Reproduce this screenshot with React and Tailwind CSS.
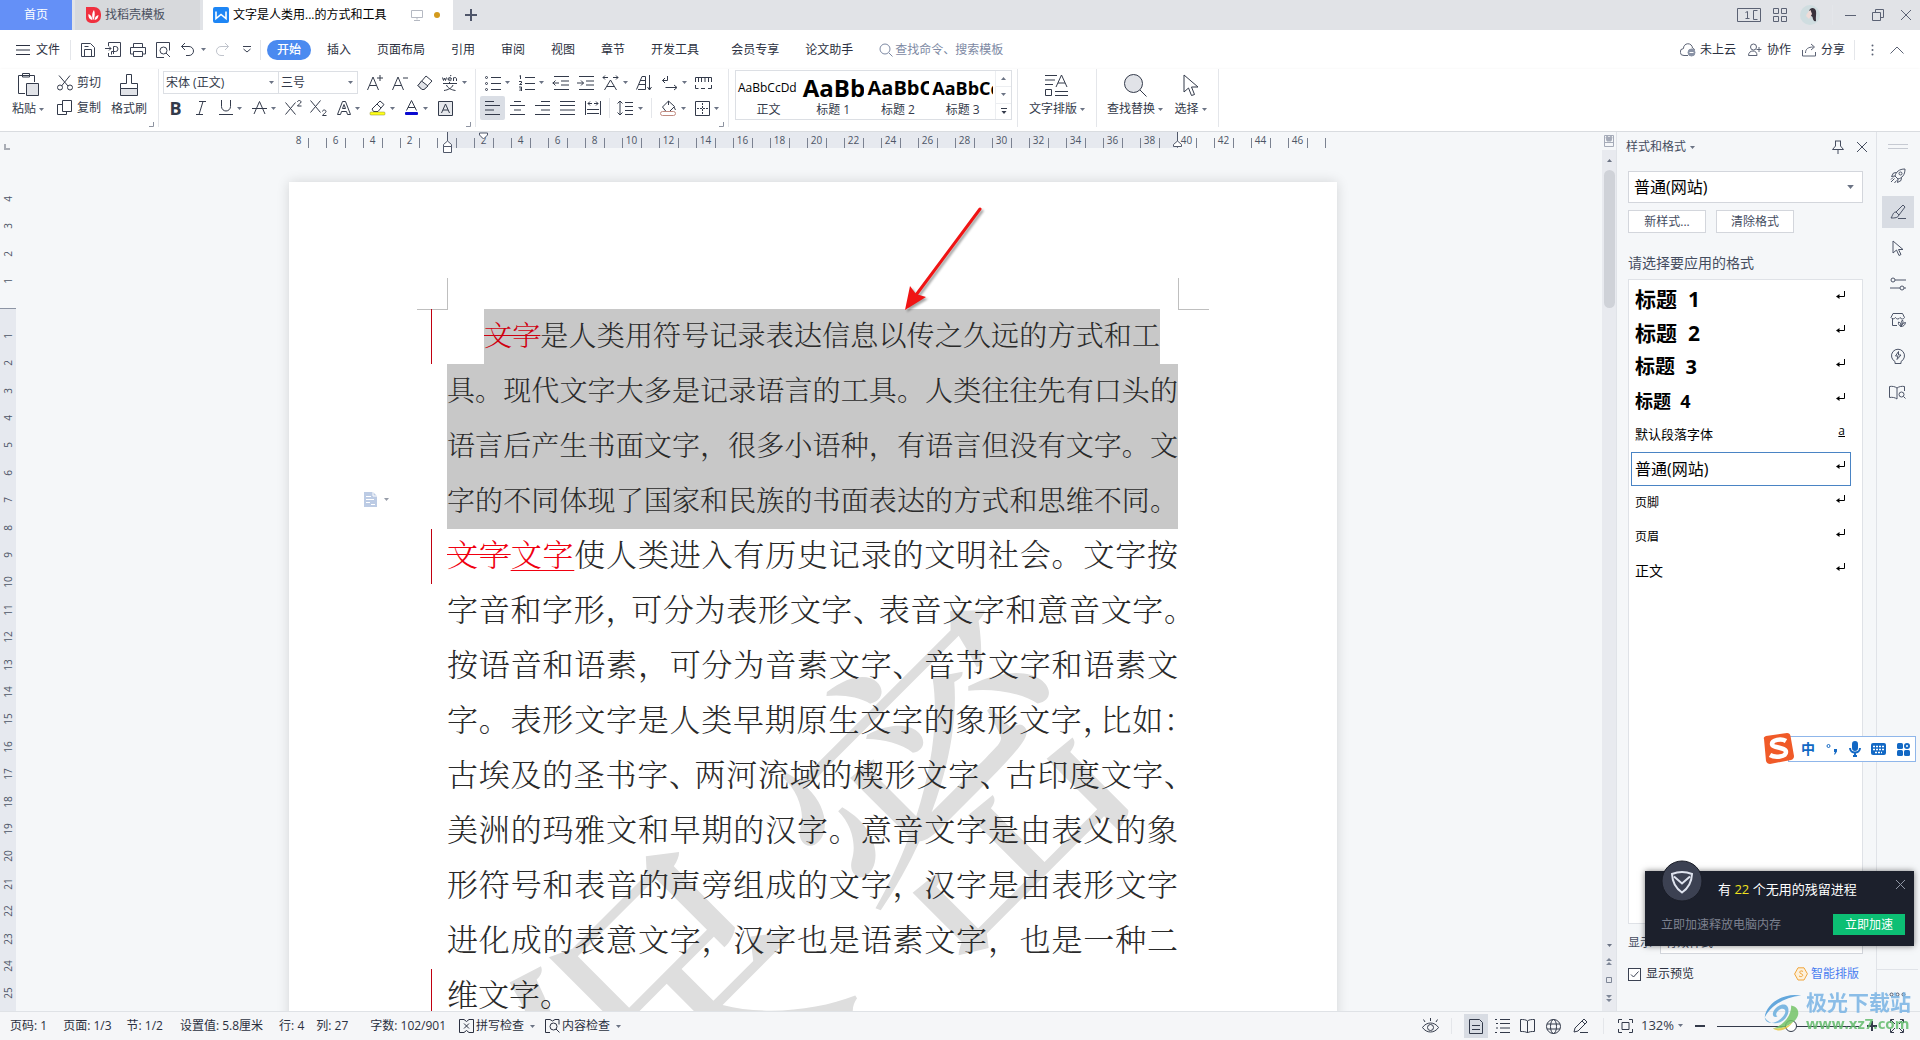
import React from 'react';

const Svg = ({ w = 18, h = 18, vb, sw = 1, className = '', children }) => (
  <svg
    width={w}
    height={h}
    viewBox={vb || `0 0 ${w} ${h}`}
    fill="none"
    stroke="currentColor"
    strokeWidth={sw}
    className={`shrink-0 ${className}`}
    aria-hidden="true"
  >
    {children}
  </svg>
);

const Caret = ({ className = '' }) => (
  <svg width="5" height="3" viewBox="0 0 5 3" className={`shrink-0 fill-[#6b7384] ${className}`} aria-hidden="true">
    <path d="M0 0h5L2.5 3z" />
  </svg>
);

const Tool = ({ label, caret, active, children }) => (
  <button
    type="button"
    aria-label={label}
    className={`flex h-6 shrink-0 items-center justify-center gap-1 rounded-xs ${caret ? 'w-[34px]' : 'w-[25px]'} ${active ? 'bg-[#dadee5]' : ''}`}
  >
    {children}
    {caret && <Caret />}
  </button>
);

const VLine = ({ className = '' }) => <span className={`w-px shrink-0 bg-[#e4e6ea] ${className}`} />;

const BigTool = ({ label, caret, className, children }) => (
  <button type="button" className={`flex flex-col items-center pt-[2px] ${className}`}>
    <span className="flex h-7 items-center">{children}</span>
    <span className="flex items-center gap-[3px] whitespace-nowrap leading-5">
      {label}
      {caret && <Caret />}
    </span>
  </button>
);

/* ---------- title bar ---------- */

function TitleBar() {
  return (
    <header className="flex h-[30px] shrink-0 items-stretch bg-[#e1e3e7]">
      <button type="button" className="w-[72px] bg-[#6490f7] text-white">首页</button>
      <button type="button" className="ml-[3px] flex w-[125px] items-center gap-1 bg-[#d7d9dc] pl-[11px] text-[#4a5060]">
        <svg width="15" height="16" viewBox="0 0 15 16" aria-hidden="true">
          <path d="M0 0h8a7 7 0 0 1 7 7v2a7 7 0 0 1-7 7H5a5 5 0 0 1-5-5z" fill="#f0303f" />
          <path d="M7.500 13C5.500 10 6 5.500 8 3c1.200 2.500 1 7-.5 10zM6.500 13C3.500 12.500 2 10 2.500 7c2.500 1 4 3.500 4 6zM8.500 13c.2-2.500 1.500-4.500 4-5-.2 3-1.500 4.800-4 5z" fill="#fff" />
        </svg>
        找稻壳模板
      </button>
      <div className="ml-[3px] flex w-[250px] items-center bg-white pl-[10px] text-black">
        <svg width="16" height="16" viewBox="0 0 16 16" aria-hidden="true">
          <rect width="16" height="16" rx="2" fill="#1e86f5" />
          <path d="M3 4.500v7l5-4 5 4v-7" fill="none" stroke="#fff" strokeWidth="1.600" />
        </svg>
        <span className="ml-1 whitespace-nowrap">文字是人类用...的方式和工具</span>
        <Svg w={12} h={12} className="ml-auto text-[#b5b9c2]">
          <path d="M.5 1.500h11v7H.5zM6 8.500v2M3 11.500h6" />
        </Svg>
        <span className="mr-[13px] ml-[11px] size-[6px] rounded-full bg-[#d39a1c]" />
      </div>
      <button type="button" aria-label="新建" className="flex w-9 items-center justify-center text-[#4f566a]">
        <Svg w={12} h={12} sw={2}><path d="M6 0v12M0 6h12" /></Svg>
      </button>
      <div className="ml-auto flex items-center pr-2 text-[#5b6274]">
        <button type="button" aria-label="窗口">
          <Svg w={24} h={14}>
            <path d="M.5.5h23v13H.5zM20.500 2.500h-4v9h4M8.500 4.500l2-1v7M8.500 10.500h4" />
          </Svg>
        </button>
        <button type="button" aria-label="应用" className="ml-3">
          <Svg w={14} h={14}><path d="M.5.5h5v5h-5zM8.500.5h5v5h-5zM.5 8.500h5v5h-5zM8.500 8.500h5v5h-5z" /></Svg>
        </button>
        <button type="button" aria-label="头像" className="ml-[13px]">
          <svg width="20" height="20" viewBox="0 0 20 20" aria-hidden="true">
            <circle cx="10" cy="10" r="10" fill="#cfdde0" />
            <path d="M9 6c1-4 6-4 7 0 .5 3-.5 6 0 10-2 1-3-1-3.500-4-1-1-3-2-3.500-6z" fill="#38323c" />
            <path d="M10.500 5c-2 1-4 4-4.500 6l3 3 3-5z" fill="#f0dcd8" />
          </svg>
        </button>
        <VLine className="ml-3 h-5 bg-[#c8cbd2]" />
        <button type="button" aria-label="最小化" className="ml-3">
          <Svg w={11} h={12}><path d="M0 6.500h11" /></Svg>
        </button>
        <button type="button" aria-label="还原" className="ml-4">
          <Svg w={12} h={12}><path d="M.5 3.500h8v8h-8zM3.500 3.500v-3h8v8h-3" /></Svg>
        </button>
        <button type="button" aria-label="关闭" className="ml-4">
          <Svg w={12} h={12}><path d="M1 1l10 10M11 1L1 11" /></Svg>
        </button>
      </div>
    </header>
  );
}

/* ---------- menu bar ---------- */

const MENUS = ['插入', '页面布局', '引用', '审阅', '视图', '章节', '开发工具'];
const EXTRA_MENUS = ['会员专享', '论文助手'];

function MenuBar() {
  return (
    <nav className="flex h-[39px] shrink-0 items-center px-4 text-[#2b3040]">
      <button type="button" className="flex items-center gap-[6px]">
        <Svg w={14} h={10}><path d="M0 .5h14M0 5h14M0 9.500h14" /></Svg>
        文件
      </button>
      <VLine className="ml-[10px] h-5" />
      <div className="ml-[9px] flex items-center gap-[9px] text-[#3a4152]">
        <button type="button" aria-label="保存">
          <Svg w={16} h={16}><path d="M1.500 1.500h9l4 4v9h-13zM4.500 14V7.500h7V14M4.500 4.500h4" /></Svg>
        </button>
        <button type="button" aria-label="输出为PDF">
          <Svg w={16} h={16}><path d="M3.500 4V.5h12v14h-12V11M0 6.500h6M4 4.500l2 2-2 2M8.500 12V4.500h2a2 2 0 0 1 0 5H6.500v3" /></Svg>
        </button>
        <button type="button" aria-label="打印">
          <Svg w={16} h={16}><path d="M3.500 5V1.500h9V5M3.500 12h-3V5.500h15V12h-3M3.500 9.500h9v5h-9z" /></Svg>
        </button>
        <button type="button" aria-label="打印预览">
          <Svg w={16} h={16}><path d="M9 15.500H1.500V.5h13v8" /><circle cx="8.500" cy="8.500" r="3.500" /><path d="M11 11l4 4" /></Svg>
        </button>
        <button type="button" aria-label="撤销" className="flex items-center gap-[6px]">
          <Svg w={15} h={15}><path d="M5 1L1.500 4.500 5 8M1.500 4.500H9a4.500 4.500 0 0 1 0 9H6" /></Svg>
          <Caret />
        </button>
        <button type="button" aria-label="恢复" className="text-[#c0c4cc]">
          <Svg w={15} h={15}><path d="M10 1l3.500 3.500L10 8M13.500 4.500H6a4.500 4.500 0 0 0 0 9h3" /></Svg>
        </button>
        <button type="button" aria-label="更多" className="ml-1">
          <Svg w={8} h={7}><path d="M0 .5h8M.5 3L4 6l3.500-3" /></Svg>
        </button>
      </div>
      <VLine className="ml-[9px] h-5" />
      <button type="button" className="ml-[6px] h-5 w-11 rounded-full bg-[#4a8af0] font-medium text-white">开始</button>
      <div className="ml-4 flex items-center gap-[26px]">
        {MENUS.map((m) => (
          <button type="button" key={m} className="whitespace-nowrap">{m}</button>
        ))}
      </div>
      <div className="ml-8 flex items-center gap-[26px]">
        {EXTRA_MENUS.map((m) => (
          <button type="button" key={m} className="whitespace-nowrap">{m}</button>
        ))}
      </div>
      <label className="ml-[26px] flex items-center gap-[2px] text-[#7d89a3]">
        <Svg w={14} h={14}><circle cx="6" cy="6" r="5" /><path d="M10 10l3.500 3.500" /></Svg>
        <input type="text" aria-label="搜索" placeholder="查找命令、搜索模板" className="w-[130px] bg-transparent outline-none placeholder:text-[#7d89a3]" />
      </label>
      <div className="ml-auto flex items-center whitespace-nowrap">
        <button type="button" className="flex items-center gap-1">
          <Svg w={16} h={14} className="text-[#5b6274]">
            <path d="M8 12.500H4a3.500 3.500 0 0 1-.5-7 4.500 4.500 0 0 1 9-.5c1 .3 1.800 1 2 2" />
            <circle cx="11.500" cy="9.500" r="3.500" fill="#8992a5" stroke="#8992a5" /><path d="M9.500 9.500h4" stroke="#fff" />
          </Svg>
          未上云
        </button>
        <button type="button" className="ml-3 flex items-center gap-[5px]">
          <Svg w={14} h={14} className="text-[#5b6274]"><circle cx="5.500" cy="4" r="3" /><path d="M.5 12.500c0-3 2-4.500 4.500-4.500s4 1.500 4 4.500zM8.500 6.500h5M11 4v5" /></Svg>
          协作
        </button>
        <button type="button" className="ml-[11px] flex items-center gap-[5px]">
          <Svg w={14} h={14} className="text-[#5b6274]"><path d="M.5 7v6h13V9M3.500 10c0-4 2.500-6 8-6M9 1l3.500 3L9 7" /></Svg>
          分享
        </button>
        <VLine className="ml-[9px] h-5" />
        <button type="button" aria-label="更多" className="ml-4 text-[#5b6274]">
          <Svg w={3} h={12} className="fill-current stroke-none"><circle cx="1.500" cy="1.500" r="1" /><circle cx="1.500" cy="6" r="1" /><circle cx="1.500" cy="10.500" r="1" /></Svg>
        </button>
        <button type="button" aria-label="收起功能区" className="ml-4 text-[#5b6274]">
          <Svg w={14} h={8}><path d="M.5 7.500L7 1l6.500 6.500" /></Svg>
        </button>
      </div>
    </nav>
  );
}

/* ---------- ribbon ---------- */

const GALLERY = [
  ['正文', 'AaBbCcDd', 'text-xs'],
  ['标题 1', 'AaBb', 'text-[24px] font-bold'],
  ['标题 2', 'AaBbCc', 'text-xl font-bold'],
  ['标题 3', 'AaBbCc', 'text-[18px] font-bold'],
];

const Corner = () => <Svg w={5} h={5} className="absolute right-1 bottom-1 text-[#8d93a0]"><path d="M4.500 0v4.500H0" /></Svg>;

function FontBox({ label, value, className }) {
  return (
    <label className={`relative flex h-[23px] items-center border border-[#dcdfe4] ${className}`}>
      <span className="sr-only">{label}</span>
      <select className="h-[21px] w-full appearance-none bg-transparent pl-[2px] leading-5 outline-none" defaultValue={value}>
        <option>{value}</option>
      </select>
      <Caret className="pointer-events-none absolute right-1" />
    </label>
  );
}

function Ribbon() {
  return (
    <section className="flex h-[63px] shrink-0 items-stretch border-b border-[#d9dce0] bg-white text-[#333a4a] shadow-sm">
      <div className="relative flex w-[158px] pl-3">
        <BigTool label="粘贴" caret className="w-8">
          <Svg w={22} h={24}>
            <path d="M8 20.500H1.500v-18h16V9M5.500 2.500V.5h7v3.500h-7z" />
            <path d="M9.500 10.500h12v12h-12z" fill="#e1e3e8" />
          </Svg>
        </BigTool>
        <div className="ml-[13px] flex flex-col text-left">
          <button type="button" className="flex h-[27px] items-center gap-1">
            <Svg w={16} h={16}><path d="M2 .5l9 10.500M13 .5L4.500 11" /><circle cx="3" cy="12.500" r="2.500" /><circle cx="13" cy="12.500" r="2.500" /></Svg>
            剪切
          </button>
          <button type="button" className="flex h-6 items-center gap-1">
            <Svg w={16} h={16}><path d="M5 4.500H.5v10h9V12M5.500.5h9v11h-9z" /></Svg>
            复制
          </button>
        </div>
        <BigTool label="格式刷" className="ml-[10px] w-9">
          <Svg w={18} h={24}>
            <path d="M6.500 10.500v-9h5v9h6v5H.5v-5z" /><path d="M.5 15.500h17v7H.5z" fill="#e1e3e8" />
          </Svg>
        </BigTool>
        <Corner />
      </div>
      <VLine className="mb-1" />
      <div className="relative w-[316px] pl-1">
        <div className="flex h-[27px] items-center">
          <FontBox label="字体" value="宋体 (正文)" className="w-[116px]" />
          <FontBox label="字号" value="三号" className="mr-1 w-[79px] border-l-0" />
          <Tool label="增大字号"><Svg w={16} h={16}><path d="M.5 15L6 2l5.500 13M2.500 10.500h7M13 0v6M10 3h6" /></Svg></Tool>
          <Tool label="减小字号"><Svg w={16} h={16}><path d="M.5 15L6 2l5.500 13M2.500 10.500h7M11 3h5" /></Svg></Tool>
          <Tool label="清除格式"><Svg w={16} h={16}><path d="M9 1l6 5-8 8.500H5L1 10.500z" /><path d="M1 10.500L4.500 6 11 11l-4 3.500H5z" fill="#e1e3e8" /></Svg></Tool>
          <Tool label="拼音指南" caret>
            <Svg w={16} h={16}><path d="M.5 2.500l1 3 1-2.500 1 2.500 1-3M6 4h3.500c0-2-3.500-2-3.500 0s3 2 3.500 1M8 1l1.500-1M11.500 6V2.500M11.500 4c0-2 3-2 3 0v2M1 8.500h14M7.500 7v1.500M4.500 10c1 3 5 5 9 5.500M11 10c-1 3-5 5-9 5.500" /></Svg>
          </Tool>
        </div>
        <div className="flex h-6 items-center">
          <Tool label="加粗"><span className="text-[18px] leading-5 font-bold">B</span></Tool>
          <Tool label="倾斜"><Svg w={12} h={16}><path d="M4 1.500h7M1 14.500h7M8 1.500L4 14.500" /></Svg></Tool>
          <Tool label="下划线" caret><Svg w={14} h={16}><path d="M2.500 0v6.500a4.500 4.500 0 0 0 9 0V0M0 14.500h14" /></Svg></Tool>
          <Tool label="删除线" caret><Svg w={15} h={16}><path d="M2 14L7.500 1.500 13 14M0 8.500h15" /></Svg></Tool>
          <Tool label="上标"><Svg w={17} h={16}><path d="M.5 2.500l10 12M10.500 2.500l-10 12M12.500 2c0-2 3.500-2 3.500 0 0 1.500-3 2.500-3.500 4h4" /></Svg></Tool>
          <Tool label="下标"><Svg w={17} h={16}><path d="M.5.5l10 12M10.500.5l-10 12M12.500 11.500c0-2 3.500-2 3.500 0 0 1.500-3 2.500-3.500 4h4" /></Svg></Tool>
          <Tool label="文字效果" caret><Svg w={14} h={16}><path d="M.5 14.500L5.500 1.500h3l5 13h-3l-1-3h-5l-1 3zM5.500 8.500L7 4.500l1.500 4z" /></Svg></Tool>
          <Tool label="突出显示" caret>
            <Svg w={17} h={16}><path d="M3 9l8-8 4 3.500-6 7H4.500zM8 4l4 4" /><rect x="1" y="12" width="15" height="3" rx="1" fill="#ffff1a" stroke="#8a8a30" strokeWidth=".5" /></Svg>
          </Tool>
          <Tool label="字体颜色" caret>
            <Svg w={15} h={16}><path d="M2.500 10.500l5-10 5 10M4 7.500h7" /><rect x="1" y="12" width="13" height="3" rx="1" fill="#0a0ad0" stroke="none" /></Svg>
          </Tool>
          <Tool label="字符底纹"><Svg w={15} h={15}><path d="M.5.5h14v14H.5z" fill="#e6e8ec" /><path d="M3.500 12l4-9 4 9M5 9h5" /></Svg></Tool>
        </div>
        <Corner />
      </div>
      <VLine className="mb-1" />
      <div className="relative w-[252px] pl-1">
        <div className="flex h-[27px] items-center">
          <Tool label="项目符号" caret><Svg w={16} h={16}><path d="M6 2.500h10M6 8.500h10M6 14.500h10" /><circle cx="1.500" cy="2.500" r="1" /><circle cx="1.500" cy="8.500" r="1" /><circle cx="1.500" cy="14.500" r="1" /></Svg></Tool>
          <Tool label="编号" caret><Svg w={16} h={16}><path d="M6 2.500h10M6 8.500h10M6 14.500h10M.5 1l1-.5V4M0 6.500h2.500v1.500L.5 9.500H3M0 12h2.500v4H0M.5 14h2" /></Svg></Tool>
          <Tool label="减少缩进"><Svg w={17} h={16}><path d="M2 1.500h15M9 6h8M9 10h8M2 14.500h15M.5 8H7M3.500 5.500L1 8l2.500 2.500" /></Svg></Tool>
          <Tool label="增加缩进"><Svg w={17} h={16}><path d="M2 1.500h15M9 6h8M9 10h8M2 14.500h15M0 8h6.500M4 5.500L6.500 8 4 10.500" /></Svg></Tool>
          <Tool label="中文版式" caret><Svg w={17} h={16}><path d="M2.500 15l6-10 6 10M5 11.500h7M1 2.500h5M3 .5l-2 2 2 2M11 2.500h5M14 .5l2 2-2 2" /></Svg></Tool>
          <Tool label="排序"><Svg w={17} h={16}><path d="M.5 14.500L6 1.500h3.500v13M3 9.500h6.500M2 14.500h7.500M4 5.500h5.500M13.500 0v14.500M11.500 12l2 3 2-3" /></Svg></Tool>
          <Tool label="换行" caret><Svg w={16} h={16}><path d="M5.500 1v4.500H.5M3 3L.5 5.500 3 8M3.500 12.500h11M12 10l3 2.500-3 2.500" /></Svg></Tool>
          <Tool label="制表位"><Svg w={17} h={14}><path d="M.5 6V1.500h16V6M.5 9v3.500h3M6 12.500h4M13 12.500h3.500V9M3.500 2v4M6.500 2v4M10 2v4M13.500 2v4" /></Svg></Tool>
        </div>
        <div className="flex h-6 items-center">
          <Tool label="左对齐" active><Svg w={15} h={14}><path d="M0 .5h9M0 4.500h15M0 9h9M0 13.500h15" /></Svg></Tool>
          <Tool label="居中"><Svg w={15} h={14}><path d="M4 .5h7M0 4.500h15M4 9h7M0 13.500h15" /></Svg></Tool>
          <Tool label="右对齐"><Svg w={15} h={14}><path d="M6 .5h9M0 4.500h15M6 9h9M0 13.500h15" /></Svg></Tool>
          <Tool label="两端对齐"><Svg w={15} h={14}><path d="M0 .5h15M0 4.500h15M0 9h15M0 13.500h15" /></Svg></Tool>
          <Tool label="分散对齐"><Svg w={16} h={14}><path d="M.5 0v14M15.500 0v14M3 2.500h4M9 2.500h4M5 .5l-2 2 2 2M11 .5l2 2-2 2M2 8.500h12M2 12.500h12" /></Svg></Tool>
          <VLine className="mr-[3px] ml-1 h-5" />
          <Tool label="行距" caret><Svg w={17} h={16}><path d="M3 1v14M.5 3.500L3 1l2.500 2.500M.5 12.500L3 15l2.500-2.500M8 2.500h8M8 6.500h8M8 10.500h8M8 14.500h8" /></Svg></Tool>
          <VLine className="mr-1 ml-1 h-5" />
          <Tool label="底纹颜色" caret><Svg w={17} h={16}><path d="M2.500 7l6-6 6 5.500-5 5H6zM8.500 1v4M14 7l1.500 3" /><rect x=".5" y="11.500" width="15" height="4" rx="2" stroke="#c08a80" fill="#fff" /></Svg></Tool>
          <Tool label="边框" caret><Svg w={15} h={15}><path d="M.5.5h14v14H.5z" /><path d="M7.500 2v12M2 7.500h12" strokeDasharray="2 1" /></Svg></Tool>
        </div>
        <Corner />
      </div>
      <VLine className="mb-1" />
      <div className="flex w-[288px] items-start pt-px pl-[6px]">
        <div className="flex h-[50px] w-[277px] border border-[#dcdfe4]">
          {GALLERY.map(([name, sample, cls], i) => (
            <button type="button" key={name} className="flex h-full w-[65px] flex-col items-center overflow-hidden">
              <span className={`flex h-[33px] items-center self-start overflow-hidden pl-[2px] text-black ${i === 0 ? 'w-[65px]' : 'w-[63px]'} ${cls}`}>
                {sample}
              </span>
              <span className="leading-3">{name}</span>
            </button>
          ))}
          <div className="ml-auto flex w-4 flex-col border-l border-[#eceef1]">
            <button type="button" aria-label="上一行" className="flex flex-1 items-center justify-center border-b border-[#eceef1]"><Caret className="rotate-180" /></button>
            <button type="button" aria-label="下一行" className="flex flex-1 items-center justify-center border-b border-[#eceef1]"><Caret /></button>
            <button type="button" aria-label="展开" className="flex flex-1 items-center justify-center"><Svg w={6} h={7}><path d="M0 .5h6" /><path d="M.5 3h5L3 6z" fill="currentColor" stroke="none" /></Svg></button>
          </div>
        </div>
      </div>
      <VLine className="mb-1" />
      <div className="flex w-[78px] justify-center">
        <BigTool label="文字排版" caret className="w-[70px]">
          <Svg w={24} h={22}><path d="M0 1.500h12M0 6h10M0 10.500h8M.5 15.500h6v6h-6zM10 17.500h13M10 21.500h13M11 13l5.500-12L22 13M13 9h7" /></Svg>
        </BigTool>
      </div>
      <VLine className="mb-1" />
      <div className="flex w-[121px] pl-[9px]">
        <BigTool label="查找替换" caret className="w-[58px]">
          <Svg w={23} h={23}><circle cx="9.500" cy="9.500" r="9" fill="#e1e3e8" /><path d="M16 16l6.500 6.500" /></Svg>
        </BigTool>
        <BigTool label="选择" caret className="ml-[10px] w-[33px]">
          <Svg w={16} h={23}><path d="M1 1v17l4.500-4 3 7.500 3-1-3-7.500H15z" /></Svg>
        </BigTool>
      </div>
      <VLine className="mb-1" />
    </section>
  );
}

/* ---------- rulers ---------- */

const H_CELLS = Array.from({ length: 29 }, (_, i) => i * 2 - 8);
const V_CELLS = Array.from({ length: 30 }, (_, i) => i - 4);

function HRuler() {
  return (
    <div className="h-4 shrink-0 pl-2">
      <div className="relative mx-auto h-4 w-[1048px]">
        <div className="absolute inset-y-0 left-[158px] w-[731px] bg-[#e6e9ef]" />
        <div className="relative -ml-[9px] flex h-4 w-[1073px] text-[10px] leading-4 text-[#4d5566]">
          {H_CELLS.map((n) => (
            <div key={n} className="relative flex w-[37px] shrink-0 justify-center">
              {n > -8 && <span className="absolute top-[6px] left-[9px] h-[10px] w-px bg-[#7b8291]" />}
              {n !== 0 && n < 48 && Math.abs(n)}
              {n < 48 && <span className="absolute top-[6px] left-[28px] h-[10px] w-px bg-[#7b8291]" />}
            </div>
          ))}
        </div>
        <Svg w={9} h={22} className="absolute top-0 left-[154px] z-10 text-[#50586a]">
          <path d="M4.500 0v9" /><path d="M.5 14.500v-2L4.500 9l4 3.500v2zM.5 14.500h8v6h-8z" fill="#fff" />
        </Svg>
        <Svg w={9} h={8} className="absolute top-0 left-[190px] text-[#50586a]"><path d="M.5 1h8v2l-4 4-4-4z" fill="#fff" /></Svg>
        <Svg w={9} h={16} className="absolute top-0 left-[884px] text-[#50586a]"><path d="M4.500 0v9" /><path d="M.5 14.500v-2L4.500 9l4 3.500v2z" fill="#fff" /></Svg>
      </div>
    </div>
  );
}

function VRuler() {
  return (
    <div className="flex w-4 shrink-0 flex-col">
      <Svg w={6} h={6} sw={2} className="mt-3 ml-1 text-[#a9adb5]"><path d="M1 0v5h5" /></Svg>
      <div className="relative mt-[35px] flex min-h-0 flex-1 flex-col pb-1">
        <div className="absolute inset-x-0 top-[123px] bottom-0 border-t border-[#8d95a5] bg-[#e6e9ef]" />
        {V_CELLS.map((n) => (
          <div key={n} className="relative flex min-h-0 flex-1 items-center justify-center text-[10px] leading-none text-[#4d5566]">
            {n !== 0 && <span className="-rotate-90">{Math.abs(n)}</span>}
          </div>
        ))}
      </div>
    </div>
  );
}

/* ---------- document ---------- */

const SELECTED = [
  '具。现代文字大多是记录语言的工具。人类往往先有口头的',
  '语言后产生书面文字，很多小语种，有语言但没有文字。文',
  '字的不同体现了国家和民族的书面表达的方式和思维不同。',
];

/* `marks` lists the punctuation that is set narrow in a line, `inner` its width before the line end. */
const BODY = [
  { text: '字音和字形，可分为表形文字、表音文字和意音文字。', marks: /([，、。])/, inner: 'w-[25px]' },
  { text: '按语音和语素，可分为音素文字、音节文字和语素文' },
  { text: '字。表形文字是人类早期原生文字的象形文字，比如：', marks: /([，：])/, inner: 'w-[17px]' },
  { text: '古埃及的圣书字、两河流域的楔形文字、古印度文字、', marks: /([、])/, inner: 'w-[25px]' },
  { text: '美洲的玛雅文和早期的汉字。意音文字是由表义的象' },
  { text: '形符号和表音的声旁组成的文字，汉字是由表形文字' },
  { text: '进化成的表意文字，汉字也是语素文字，也是一种二' },
];

function Line({ text, marks, inner }) {
  if (!marks) return text;
  const parts = text.split(marks).filter(Boolean);
  return parts.map((part, i) =>
    part.length === 1 && marks.test(part) ? (
      <span key={i} className={`inline-block text-left [text-align-last:left] ${i === parts.length - 1 ? 'w-[14px]' : inner}`}>{part}</span>
    ) : (
      part
    )
  );
}

const Revision = () => <span className="absolute inset-y-0 -left-4 w-px bg-[#c00010]" />;

function Page() {
  return (
    <article className="relative mx-auto w-[1048px] shrink-0 bg-white pt-[127px] pr-[159px] pl-[158px] text-[#2a2a2a] shadow-[0_0_12px_rgba(0,0,0,0.14)]">
      <div className="absolute top-[96px] left-[128px] h-8 w-[31px] border-r border-b border-[#bfbfbf]" />
      <div className="absolute top-[96px] right-[128px] h-8 w-[31px] border-b border-l border-[#bfbfbf]" />
      <div aria-hidden="true" className="absolute inset-x-0 top-0 h-[829px] overflow-hidden font-['Noto_Serif_CJK_SC','Noto_Sans_CJK_SC',sans-serif] text-[324px] leading-none font-normal text-[#dedede] select-none">
        <span className="absolute top-[427px] left-[487px] -rotate-45">密</span>
        <span className="absolute top-[674px] left-[209px] -rotate-45">保</span>
      </div>
      <div className="relative font-['Noto_Serif_CJK_SC','Noto_Sans_CJK_SC',sans-serif] font-light">
        <div className="text-[28px] leading-[51px] whitespace-nowrap [text-align-last:justify]">
          <div className="relative">
            <Revision />
            <p className="mr-[18px] ml-[37px] bg-[#c8c8c8] pb-1"><del className="text-[#cf0010] decoration-1">文字</del>是人类用符号记录表达信息以传之久远的方式和工</p>
          </div>
          {SELECTED.map((line) => <p key={line} className="bg-[#c8c8c8] pb-1">{line}</p>)}
        </div>
        <div className="text-[31px] leading-[47px] whitespace-nowrap [text-align-last:justify]">
          <p className="relative pb-2">
            <Revision />
            <del className="text-[#f00010] decoration-1">文字</del>
            <ins className="text-[#f00010] underline decoration-1 underline-offset-4">文字</ins>
            使人类进入有历史记录的文明社会。文字按
          </p>
          {BODY.map((line) => <p key={line.text} className="pb-2"><Line {...line} /></p>)}
          <p className="relative pb-2 [text-align-last:left]"><Revision />维文字。</p>
        </div>
      </div>
      <button type="button" aria-label="段落布局" className="absolute top-[310px] left-[75px] flex items-center gap-[7px]">
        <svg width="13" height="15" viewBox="0 0 13 15" aria-hidden="true">
          <path d="M0 0h9l4 4v11H0z" fill="#bccbe4" /><path d="M2 4.500h5M2 7.500h8M2 10.500h4M7 12.500h4M9 0v4h4" stroke="#fff" fill="none" />
        </svg>
        <Caret className="opacity-70" />
      </button>
      <svg width="90" height="112" viewBox="0 0 90 112" className="absolute top-[22px] left-[608px] drop-shadow-[2px_2px_1px_rgba(0,0,0,0.35)]" aria-hidden="true">
        <path d="M83 5L19 91" stroke="#f01414" strokeWidth="3" strokeLinecap="round" />
        <path d="M8 106L13 82l6 8 10 3z" fill="#f01414" />
      </svg>
    </article>
  );
}

function VScroll() {
  return (
    <div className="flex w-[14px] shrink-0 flex-col items-center text-[#7e8797]">
      <div className="flex h-[18px] items-center"><Svg w={10} h={12} className="text-[#a5abb8]"><path d="M.5.5h9v11h-9zM.5 7.500h9" /><path d="M2 2c1-1 2-1 3 1 1-2 2-2 3-1L7 6H3z" fill="currentColor" /></Svg></div>
      <div className="flex min-h-0 w-full flex-1 flex-col items-center bg-[#e8eaef] pb-2">
        <button type="button" aria-label="向上滚动" className="flex h-5 items-center"><Caret className="rotate-180" /></button>
        <div className="h-[138px] w-[11px] rounded-full bg-[#cfd2d8]" />
        <button type="button" aria-label="向下滚动" className="mt-auto"><Caret /></button>
        <button type="button" aria-label="上一页" className="mt-[10px]"><Svg w={6} h={8} className="fill-current stroke-none"><path d="M0 4l3-3 3 3zM0 8l3-3 3 3z" /></Svg></button>
        <button type="button" aria-label="浏览对象" className="mt-3"><Svg w={6} h={6}><path d="M.5.5h5v5h-5z" /></Svg></button>
        <button type="button" aria-label="下一页" className="mt-3"><Svg w={6} h={8} className="fill-current stroke-none"><path d="M0 0h6L3 3zM0 4h6L3 7z" /></Svg></button>
      </div>
    </div>
  );
}

/* ---------- style panel ---------- */

const STYLES = [
  ['标题 1', 'text-[21px] font-bold'],
  ['标题 2', 'text-[21px] font-bold'],
  ['标题 3', 'text-xl font-bold'],
  ['标题 4', 'text-[18px] font-bold'],
  ['默认段落字体', 'text-[13px]'],
  ['普通(网站)', 'text-base'],
  ['页脚', 'text-xs'],
  ['页眉', 'text-xs'],
  ['正文', 'text-sm'],
];

function StylePanel() {
  return (
    <aside className="flex w-[261px] shrink-0 flex-col border-x border-[#e0e3e8] pr-[13px] pl-[11px] text-[#454d5f]">
      <div className="-ml-[2px] flex h-[30px] items-center">
        <button type="button" className="flex items-center gap-1">样式和格式<Caret /></button>
        <button type="button" aria-label="固定" className="ml-auto"><Svg w={14} h={14}><path d="M4 1h6M4.500 1v5l-3 3.500h11l-3-3.500V1M7 9.500V14" /></Svg></button>
        <button type="button" aria-label="关闭" className="-mr-1 ml-3"><Svg w={10} h={10}><path d="M0 0l10 10M10 0L0 10" /></Svg></button>
      </div>
      <label className="relative mt-[9px] flex h-8 shrink-0 items-center border border-[#d3d6dc] bg-white text-base text-black">
        <span className="sr-only">当前样式</span>
        <select className="h-[30px] w-full appearance-none bg-transparent pl-[5px] outline-none" defaultValue="普通(网站)"><option>普通(网站)</option></select>
        <Caret className="pointer-events-none absolute right-2 h-1 w-[7px]" />
      </label>
      <div className="mt-[7px] flex shrink-0 gap-[10px]">
        <button type="button" className="h-[23px] w-[78px] border border-[#d3d6dc] bg-white">新样式...</button>
        <button type="button" className="h-[23px] w-[78px] border border-[#d3d6dc] bg-white">清除格式</button>
      </div>
      <h2 className="mt-5 text-sm leading-5">请选择要应用的格式</h2>
      <ul className="mt-[6px] min-h-0 flex-1 border border-[#dfe2e7] bg-white pt-[2px] pr-[11px] pl-[2px] text-black">
        {STYLES.map(([name, cls], i) => (
          <li key={name}>
            <button type="button" className={`flex h-[34px] w-full items-center justify-between border pr-[5px] pl-[3px] ${i === 5 ? 'border-[#4a84c4]' : 'border-transparent'}`}>
              <span className={`whitespace-pre ${cls}`}>{i < 4 ? name.replace(' ', '  ') : name}</span>
              {i === 4 ? <span className="mb-2 text-xs leading-3 underline">a</span> : (
                <Svg w={9} h={8} className="mb-2"><path d="M8.500 0v5.500H1" /><path d="M0 5.500L3.500 3v5z" fill="currentColor" stroke="none" /></Svg>
              )}
            </button>
          </li>
        ))}
      </ul>
      <label className="mt-2 flex h-[22px] shrink-0 items-center gap-2">
        显示
        <select className="h-[22px] flex-1 appearance-none border border-[#d3d6dc] bg-white pl-1 outline-none" defaultValue="有效样式"><option>有效样式</option></select>
      </label>
      <div className="mt-[10px] mb-[27px] flex h-5 shrink-0 items-center">
        <label className="flex items-center gap-[5px] text-[#2b3040]">
          <span className="relative flex size-[13px]">
            <input type="checkbox" defaultChecked className="size-[13px] appearance-none border border-[#3a4152] bg-white" />
            <Svg w={13} h={13} className="pointer-events-none absolute inset-0 text-[#3a4152]"><path d="M3 6.500L5.500 9 10.500 3.500" /></Svg>
          </span>
          显示预览
        </label>
        <a href="#smart" className="mr-1 ml-auto flex items-center gap-[3px] text-[#4a7df0]">
          <Svg w={14} h={14} className="text-[#f0a63c]"><path d="M4 .8h6l3.400 6L10 13H4L.6 7z" fill="#fdf0da" /><path d="M9 4.500C7 3 5 4.500 6 6l2.500 1.500C9.500 9 7 10.500 5 9" /></Svg>
          智能排版
        </a>
      </div>
    </aside>
  );
}

function ToolRail() {
  return (
    <aside className="flex w-[43px] shrink-0 flex-col items-center pt-3 pr-[2px] text-[#4d5568]">
      <Svg w={20} h={5} className="text-[#c6cad2]"><path d="M0 .5h20M0 4.500h20" /></Svg>
      <div className="mt-[11px] flex flex-col items-center gap-1">
        <button type="button" aria-label="助手" className="flex size-8 items-center justify-center">
          <Svg w={16} h={16}><path d="M5 8c1-4 4-7 10-7 0 6-3 9-7 10zM5 8L1.500 8.500 3.500 5l3-.5M8 11l-.5 3.500L11 12.500l.5-3M4.500 10.500L1 14M3 9.500l-2 2M6.500 12.500l-2 2.500" /><circle cx="10.500" cy="5.500" r="1.500" /></Svg>
        </button>
        <button type="button" aria-label="样式" className="flex size-8 items-center justify-center bg-[#d8dce3]">
          <Svg w={16} h={16}><path d="M6 8l7-7 2 2-6 8zM6 8c-3 0-3 3-5 6 4 0 7 0 8-3zM8 14.500h8" /></Svg>
        </button>
        <button type="button" aria-label="选择" className="flex size-8 items-center justify-center">
          <Svg w={14} h={16}><path d="M2 1v12l3.500-3 2.500 5.500 2-1L7.500 9.500H12z" /></Svg>
        </button>
        <button type="button" aria-label="属性" className="flex size-8 items-center justify-center">
          <Svg w={16} h={14}><circle cx="3" cy="3" r="2" /><path d="M5 3h11M0 11h10" /><circle cx="12" cy="11" r="2" /><path d="M14 11h2" /></Svg>
        </button>
        <button type="button" aria-label="素材" className="flex size-8 items-center justify-center">
          <Svg w={16} h={16}><path d="M2.500 6v7.500H7M1 5.500L3 1.500h9.500l2 4c-1 2-3 2-4.500 0-1 2-3.500 2-4.500 0-1 1.500-3.500 2-4.500 0zM11 14.500c-2-1-3-2.500-2.500-4.500 2 .5 2.500 2 2.500 4.500 0-3 0-5 1.500-6.500 1 2 .5 4-1.500 6.500 1-2.500 2-3.500 4.500-4-.5 2.500-2 4-4.500 4z" /></Svg>
        </button>
        <button type="button" aria-label="智能" className="flex size-8 items-center justify-center">
          <Svg w={16} h={17}><path d="M5 13.500A6.500 6.500 0 1 1 11 13.500v2H5zM8.500 3.500L5.500 8H8l-1 3.500L11 7H8.500z" /></Svg>
        </button>
        <button type="button" aria-label="阅读" className="flex size-8 items-center justify-center">
          <Svg w={17} h={15}><path d="M8 3C6 1.500 3 1 .5 1.500v11c3-.5 5.500 0 7.500 1.500V3c2-1.500 5-2 7.500-1.500V6" /><circle cx="12.500" cy="9.500" r="2.500" /><path d="M14.500 11.500l2 2" /></Svg>
        </button>
      </div>
      <div className="mt-auto mb-[14px] w-full border-t border-[#e0e3e8] pt-[22px]">
        <button type="button" aria-label="更多" className="mx-auto flex"><Svg w={17} h={5}><circle cx="2.500" cy="2.500" r="1.500" /><circle cx="8.500" cy="2.500" r="1.500" /><circle cx="14.500" cy="2.500" r="1.500" /></Svg></button>
      </div>
    </aside>
  );
}

/* ---------- status bar ---------- */

function StatusBar() {
  return (
    <footer className="flex h-[29px] shrink-0 items-center border-t border-[#dfe2e6] bg-[#f5f6f8] pr-4 pl-[10px] whitespace-nowrap text-[#2b3040]">
      <span>页码: 1</span>
      <span className="ml-4">页面: 1/3</span>
      <span className="ml-[15px]">节: 1/2</span>
      <span className="ml-[17px]">设置值: 5.8厘米</span>
      <span className="ml-4">行: 4</span>
      <span className="ml-3">列: 27</span>
      <span className="ml-[22px]">字数: 102/901</span>
      <button type="button" className="ml-[13px] flex items-center gap-[2px]">
        <Svg w={15} h={14}><path d="M5 .5H.5v13H5M10 .5h4.500v13H10M5 .5l2.500 2 2.500-2M5 13.500l2.500-2 2.500 2M5 4.500l5 5M10 4.500l-5 5" /></Svg>
        拼写检查
        <Caret className="ml-1" />
      </button>
      <button type="button" className="ml-[10px] flex items-center gap-[2px]">
        <Svg w={15} h={14}><path d="M5 .5H.5v13H5M10 .5h4v5M5 .5l2.500 1.500L10 .5" /><circle cx="8.500" cy="7.500" r="3.500" /><path d="M11 10l3.500 3.500" /></Svg>
        内容检查
        <Caret className="ml-1" />
      </button>
      <div className="ml-auto flex items-center text-[#333a4a]">
        <button type="button" aria-label="护眼模式"><Svg w={17} h={16}><path d="M.5 9.500c4-6 12-6 16 0-4 6-12 6-16 0zM8.500 3V0M3 4L1.500 1.500M14 4l1.500-2.500" /><circle cx="8.500" cy="9.500" r="3" /></Svg></button>
        <VLine className="mx-3 h-4" />
        <button type="button" aria-label="页面视图" className="flex h-6 w-6 items-center justify-center bg-[#d8dce3]"><Svg w={14} h={15}><path d="M.5.5h10l3 3v11H.5zM3 6.500h8M3 10.500h8" /></Svg></button>
        <button type="button" aria-label="大纲" className="ml-[7px]"><Svg w={15} h={14}><path d="M5 .5h10M5 4.500h10M5 9h10M5 13.500h10M0 .5h2M1 4.500h2M1 9h2M0 13.500h2" /></Svg></button>
        <button type="button" aria-label="阅读版式" className="ml-[10px]"><Svg w={15} h={14}><path d="M7.500 2C6 .5 3 .5.500.5v12c3 0 5.500 0 7 1.500 1.500-1.500 4-1.500 7-1.500V.5c-2.500 0-5.500 0-7 1.500zv12" /></Svg></button>
        <button type="button" aria-label="Web版式" className="ml-[11px]"><Svg w={15} h={15}><circle cx="7.500" cy="7.500" r="7" /><ellipse cx="7.500" cy="7.500" rx="3" ry="7" /><path d="M1 5h13M1 10h13" /></Svg></button>
        <button type="button" aria-label="写作模式" className="ml-[11px]"><Svg w={17} h={16}><path d="M3 10L12 1l3 3-9 9-4 1zM10 3l3 3M8 14.500h8" /></Svg></button>
        <VLine className="mx-[14px] h-4" />
        <button type="button" aria-label="最佳显示比例"><Svg w={15} h={14}><path d="M.5 4V.5H4M11 .5h3.500V4M14.500 10v3.500H11M4 13.500H.5V10M4 3.500h7v7H4z" /></Svg></button>
        <button type="button" className="ml-2 flex items-center gap-1 text-[13px]">132%<Caret /></button>
        <button type="button" aria-label="缩小" className="ml-3"><Svg w={10} h={10} sw={2}><path d="M0 5h10" /></Svg></button>
        <input
          type="range"
          aria-label="显示比例"
          defaultValue="52"
          className="mr-2 ml-3 h-3 w-[142px] appearance-none bg-transparent bg-[linear-gradient(#333a4a,#333a4a)] bg-[length:100%_1px] bg-center bg-no-repeat [&::-webkit-slider-thumb]:size-3 [&::-webkit-slider-thumb]:appearance-none [&::-webkit-slider-thumb]:rounded-full [&::-webkit-slider-thumb]:border [&::-webkit-slider-thumb]:border-[#333a4a] [&::-webkit-slider-thumb]:bg-white"
        />
        <button type="button" aria-label="放大"><Svg w={10} h={10} sw={2}><path d="M0 5h10M5 0v10" /></Svg></button>
        <button type="button" aria-label="全屏" className="ml-[13px]"><Svg w={14} h={14}><path d="M.5 4V.5H4M10 .5h3.500V4M13.500 10v3.500H10M4 13.500H.5V10M1 1l4 4M13 1L9 5M13 13L9 9M1 13l4-4" /></Svg></button>
      </div>
    </footer>
  );
}

/* ---------- overlays ---------- */

function InputBar() {
  return (
    <div className="absolute top-[733px] right-[4px] flex items-center">
      <svg width="32" height="32" viewBox="0 0 32 32" className="relative z-10 -mr-[6px]" aria-hidden="true">
        <path d="M2 6q-1-2 2-3L25 0q3 0 3.500 3L32 23q0 3-3 4L8 31q-3 0-4-3z" fill="#f05a28" />
        <path d="M24 8c-5-3-14-1-14 3s14 3 14 8-11 6-16 3" stroke="#fff" strokeWidth="4.500" fill="none" />
      </svg>
      <div className="flex h-[26px] w-[128px] items-center justify-between border border-[#8fb6ea] bg-white pr-[5px] pl-3 text-[#1268c4]">
        <button type="button" className="text-sm leading-5 font-bold">中</button>
        <button type="button" aria-label="标点"><Svg w={12} h={12}><circle cx="2.500" cy="3" r="1.500" /><path d="M8 6h3v2.500L9 11.500H8L9 9H8z" fill="currentColor" stroke="none" /></Svg></button>
        <button type="button" aria-label="语音"><Svg w={12} h={16} sw={2}><rect x="4" y="1" width="4" height="8" rx="2" fill="currentColor" /><path d="M1 7c0 6 10 6 10 0M6 12v2M4 15h4" /></Svg></button>
        <button type="button" aria-label="软键盘"><Svg w={15} h={12}><rect width="15" height="12" rx="2" fill="currentColor" stroke="none" /><path d="M2 3.500h11M2 6.500h11M4 9.500h7" stroke="#fff" strokeWidth="1.500" strokeDasharray="2 1" /></Svg></button>
        <button type="button" aria-label="工具箱"><Svg w={13} h={13} className="fill-current stroke-none"><rect width="6" height="6" rx="1.500" /><rect y="7" width="6" height="6" rx="1.500" /><rect x="7" y="7" width="6" height="6" rx="1.500" /><circle cx="10" cy="3" r="2" stroke="currentColor" strokeWidth="2" fill="#fff" /></Svg></button>
      </div>
    </div>
  );
}

function Popup() {
  return (
    <div className="absolute right-[6px] bottom-[94px] h-[75px] w-[269px] bg-[#1c202c] pr-[9px] pl-4 shadow-[0_0_6px_rgba(0,0,0,0.5)]">
      <svg width="42" height="42" viewBox="0 0 42 42" className="absolute -top-[11px] left-4" aria-hidden="true">
        <circle cx="21" cy="21" r="20" fill="#3c4152" stroke="#1a1d27" />
        <path d="M11 14q10-4 20 0-.5 12-10 18.500Q11.500 26 11 14z" fill="none" stroke="#dfe3ee" strokeWidth="2" />
        <path d="M13 16.500l8 7 8-7" fill="none" stroke="#dfe3ee" strokeWidth="2" />
      </svg>
      <div className="flex h-[38px] items-center pl-[57px] text-[13px] whitespace-pre text-white">
        有 <span className="text-[#f0e020]">22</span> 个无用的残留进程
        <button type="button" aria-label="关闭提示" className="mb-3 ml-auto text-[#8f95a3]"><Svg w={9} h={9}><path d="M0 0l9 9M9 0L0 9" /></Svg></button>
      </div>
      <div className="flex items-center justify-between pt-[5px]">
        <span className="text-[#7c818f]">立即加速释放电脑内存</span>
        <button type="button" className="h-[21px] w-[72px] bg-[#0cbf74] text-white">立即加速</button>
      </div>
    </div>
  );
}

function SiteMark() {
  return (
    <div className="pointer-events-none absolute right-[9px] bottom-2 flex items-end gap-[2px] opacity-85">
      <svg width="42" height="40" viewBox="0 0 46 42" aria-hidden="true">
        <path d="M43 3C24-1 4 12 3 27c6-12 20-22 40-24z" fill="#4a9ad8" />
        <path d="M3 27c1 8 12 8 20-1 5-6 2-10-3-8-4 2-6 6-3 8-5 2-7-3-3-8 6-7 15-7 15 1C29 31 12 40 3 27z" fill="#69aede" />
        <path d="M32 14c10 2 10 12 2 18-8 7-18 8-22 7 10-3 20-12 20-25z" fill="#74c468" />
        <path d="M12 39c9 1 16-2 22-7-6 8-14 12-22 7z" fill="#e6c83c" />
      </svg>
      <div>
        <div className="text-[21px] leading-6 font-bold text-[#79b4e4]">极光下载站</div>
        <div className="text-[15px] leading-[18px] font-bold text-[#62bb6c]">www.xz7.com</div>
      </div>
    </div>
  );
}

export default function App() {
  return (
    <div className="relative flex h-screen flex-col overflow-hidden bg-white font-['Open_Sans','Noto_Sans_CJK_SC',sans-serif] text-xs">
      <TitleBar />
      <MenuBar />
      <Ribbon />
      <main className="flex min-h-0 flex-1 bg-[#f5f7f9]">
        <VRuler />
        <div className="flex min-w-0 flex-1 flex-col">
          <HRuler />
          <div className="flex min-h-0 flex-1 flex-col overflow-hidden pt-[34px] pl-2">
            <Page />
          </div>
        </div>
        <VScroll />
        <StylePanel />
        <ToolRail />
      </main>
      <StatusBar />
      <InputBar />
      <Popup />
      <SiteMark />
    </div>
  );
}
